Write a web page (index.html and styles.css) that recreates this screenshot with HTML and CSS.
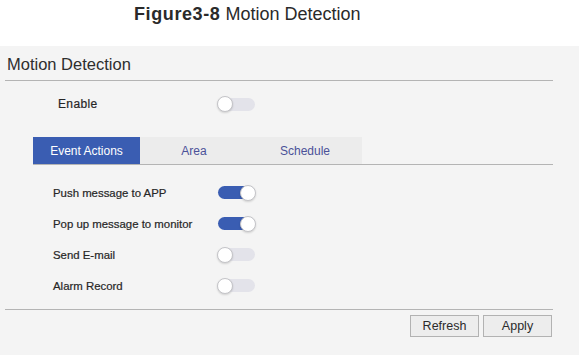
FILE: index.html
```html
<!DOCTYPE html>
<html>
<head>
<meta charset="utf-8">
<link rel="stylesheet" href="styles.css">
</head>
<body>
<div class="caption"><span class="fig">Figure3-8</span> Motion Detection</div>
<div class="panel">
  <div class="inner">
    <div class="head">Motion Detection</div>
    <div class="enable-row">
      <span class="label enable-label">Enable</span>
      <span class="toggle"></span>
    </div>
    <div class="tabs">
      <div class="tab active">Event Actions</div>
      <div class="tab">Area</div>
      <div class="tab">Schedule</div>
    </div>
    <div class="rows">
      <div class="row"><span class="label">Push message to APP</span><span class="toggle on"></span></div>
      <div class="row"><span class="label">Pop up message to monitor</span><span class="toggle on"></span></div>
      <div class="row"><span class="label">Send E-mail</span><span class="toggle"></span></div>
      <div class="row"><span class="label">Alarm Record</span><span class="toggle"></span></div>
    </div>
    <div class="footer">
      <button class="btn">Refresh</button>
      <button class="btn">Apply</button>
    </div>
  </div>
</div>
</body>
</html>
```

FILE: styles.css
```css
html, body {
  margin: 0;
  padding: 0;
  background: #ffffff;
  font-family: "Liberation Sans", Arial, sans-serif;
  color: #2b2b2b;
}

.caption {
  height: 46px;
  box-sizing: border-box;
  padding: 4px 0 0 134px;
  font-size: 18px;
  line-height: 20px;
  color: #2a2a2a;
}
.caption .fig {
  font-weight: bold;
  letter-spacing: 0.6px;
}

.panel {
  width: 579px;
  height: 309px;
  background: #f4f4f4;
}

.inner {
  margin-left: 5px;
  width: 548px;
}

.head {
  height: 30px;
  padding: 3px 0 1px 2px;
  border-bottom: 1px solid #b4b4b4;
  display: flex;
  align-items: center;
  font-size: 16.5px;
  color: #2e2e2e;
}

.enable-row {
  height: 46px;
  display: flex;
  align-items: center;
  padding-left: 53px;
}

.label {
  font-size: 11.4px;
  color: #262626;
  flex: none;
  -webkit-text-stroke: 0.2px #262626;
}
.enable-label {
  width: 160px;
  font-size: 12px;
  letter-spacing: 0.35px;
}

.toggle {
  position: relative;
  width: 37px;
  height: 13px;
  border-radius: 7px;
  background: #e3e3ea;
  flex: none;
}
.toggle::after {
  content: "";
  position: absolute;
  left: -1px;
  top: -1.5px;
  width: 14px;
  height: 14px;
  border-radius: 50%;
  background: #ffffff;
  border: 1px solid #c4c4c8;
  box-shadow: 0 1px 2px rgba(0,0,0,0.15);
}
.toggle.on {
  background: #3a5db2;
}
.toggle.on::after {
  left: auto;
  right: -1px;
}

.tabs {
  margin: 10px 0 0 28px;
  height: 27px;
  display: flex;
  border-bottom: 1px solid #b4b4b4;
}
.tab {
  height: 27px;
  display: flex;
  align-items: center;
  justify-content: center;
  font-size: 12px;
  color: #4b5199;
  background: #ececec;
}
.tab:nth-child(1) { width: 107px; }
.tab:nth-child(2) { width: 108px; }
.tab:nth-child(3) { width: 114px; }
.tab.active {
  background: #3a5db2;
  color: #ffffff;
}

.rows {
  margin-top: 13px;
  padding-left: 48px;
  display: flex;
  flex-direction: column;
  gap: 2px;
}
.row {
  height: 29px;
  display: flex;
  align-items: center;
}
.row .label {
  width: 165px;
}

.footer {
  margin-top: 9px;
  border-top: 1px solid #b4b4b4;
  padding: 5px 1px 0 0;
  display: flex;
  justify-content: flex-end;
  gap: 4px;
}
.btn {
  width: 69px;
  height: 22px;
  box-sizing: border-box;
  background: #ededed;
  border: 1px solid #b2b2b2;
  font-family: "Liberation Sans", Arial, sans-serif;
  font-size: 12.5px;
  color: #2b2b2b;
  padding: 0;
}
```
